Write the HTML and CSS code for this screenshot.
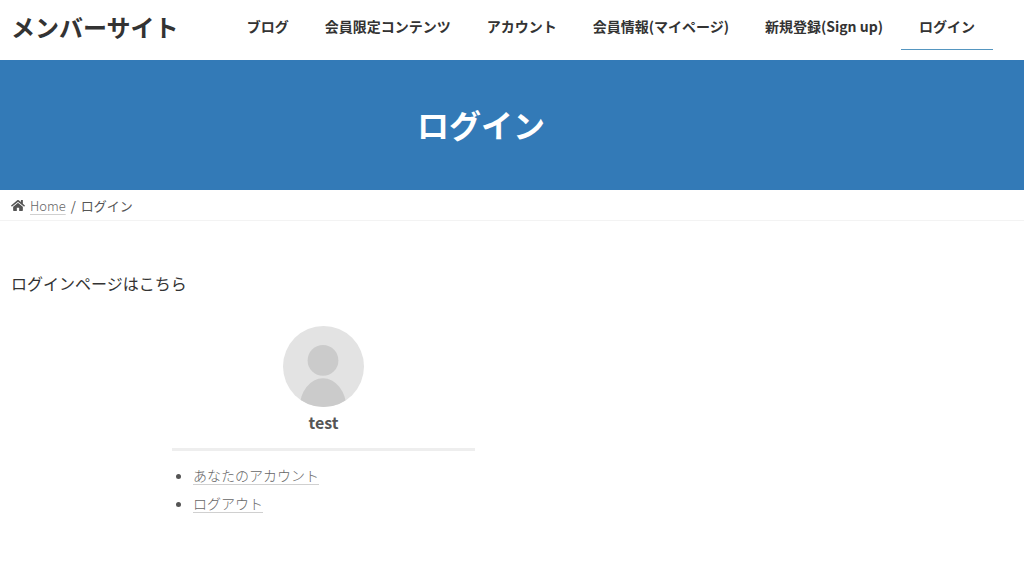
FILE: index.html
```html
<!DOCTYPE html>
<html lang="ja">
<head>
    <meta charset="UTF-8">
    <meta name="viewport" content="width=device-width, initial-scale=1.0">
    <title>ログイン | メンバーサイト</title>
    <link rel="stylesheet" href="styles.css">
</head>
<body>
    <header class="site-header">
        <a class="site-title" href="#">メンバーサイト</a>
        <nav class="global-nav">
            <a href="#">ブログ</a>
            <a href="#">会員限定コンテンツ</a>
            <a href="#">アカウント</a>
            <a href="#">会員情報(マイページ)</a>
            <a href="#">新規登録(Sign up)</a>
            <a class="current" href="#">ログイン</a>
        </nav>
    </header>

    <div class="page-header">
        <h1>ログイン</h1>
    </div>

    <nav class="breadcrumb">
        <svg class="home-icon" viewBox="0 0 576 512" aria-hidden="true">
            <path d="M488 313v143c0 13-11 24-24 24H348c-7 0-12-5-12-12V356c0-7-5-12-12-12h-72c-7 0-12 5-12 12v112c0 7-5 12-12 12H112c-13 0-24-11-24-24V313c0-4 2-7 4-10l188-154c5-4 11-4 16 0l188 154c2 3 4 6 4 10zm84-61l-84-69V44c0-7-5-12-12-12h-56c-7 0-12 5-12 12v73l-90-74c-17-14-43-14-60 0L4 252c-5 4-5 12-1 17l25 31c5 5 12 5 17 1l235-193c5-4 11-4 16 0l235 193c5 4 13 4 17-1l25-31c4-6 4-13-1-17z"/>
        </svg>
        <div>
            <a href="#">Home</a>
            <span class="separator">/</span>
            <span>ログイン</span>
        </div>
    </nav>

    <main class="content">
        <p>ログインページはこちら</p>

        <section class="member-box">
            <div class="profile">
                <svg class="avatar" viewBox="0 0 80 80" aria-hidden="true">
                    <defs>
                        <clipPath id="avatar-clip"><circle cx="40" cy="40" r="40"/></clipPath>
                    </defs>
                    <circle cx="40" cy="40" r="40" fill="#e3e3e3"/>
                    <g fill="#cbcbcb" clip-path="url(#avatar-clip)">
                        <circle cx="39.5" cy="34" r="15.2"/>
                        <ellipse cx="39.5" cy="81" rx="23" ry="29.5"/>
                    </g>
                </svg>
                <div class="member-name">test</div>
            </div>
            <ul class="member-links">
                <li><a href="#">あなたのアカウント</a></li>
                <li><a href="#">ログアウト</a></li>
            </ul>
        </section>
    </main>
</body>
</html>
```
FILE: styles.css
```css
body {
    margin: 0;
    font-family: "Noto Sans CJK JP", sans-serif;
    font-size: 16px;
    color: #333;
    background-color: #fff;
}
.site-header {
    display: flex;
    justify-content: space-between;
    height: 60px;
    padding: 0 31px 0 11px;
    box-sizing: border-box;
}
.site-title {
    font-size: 24px;
    font-weight: bold;
    line-height: 54px;
    color: #333;
    text-decoration: none;
}
.global-nav {
    display: flex;
}
.global-nav a {
    height: 49px;
    padding: 0 18px;
    font-size: 14px;
    font-weight: bold;
    line-height: 52px;
    color: #333;
    text-decoration: none;
    white-space: nowrap;
}
.global-nav .current {
    border-bottom: 1px solid #5596c0;
}
.page-header {
    padding: 40px 62px 42px 0;
    background-color: #337ab7;
    color: #fff;
    text-align: center;
}
.page-header h1 {
    margin: 0;
    font-size: 32px;
    line-height: 48px;
}
.breadcrumb {
    display: flex;
    align-items: center;
    height: 30px;
    padding: 0 11px;
    border-bottom: 1px solid #f3f3f3;
    font-size: 13px;
    color: #555;
}
.home-icon {
    width: 14px;
    height: 13px;
    margin-right: 5px;
    fill: #555;
}
.breadcrumb a,
.member-links a {
    color: #666;
    font-weight: 300;
    text-decoration: underline 1px #d0d0d0;
    text-underline-offset: 3px;
}
.separator {
    margin: 0 2px;
}
.content {
    padding: 47px 11px;
}
.content p {
    margin: 0 0 28px;
    line-height: 30px;
}
.member-box {
    width: 303px;
    margin-left: 161px;
    color: #555;
}
.profile {
    padding-bottom: 11px;
    border-bottom: 3px solid #eee;
    text-align: center;
}
.avatar {
    display: block;
    width: 81px;
    height: 81px;
    margin: 0 auto;
}
.member-name {
    font-weight: bold;
    line-height: 30px;
}
.member-links {
    margin: 10px 0 0;
    padding-left: 21px;
    font-size: 14px;
    line-height: 28px;
}
```
